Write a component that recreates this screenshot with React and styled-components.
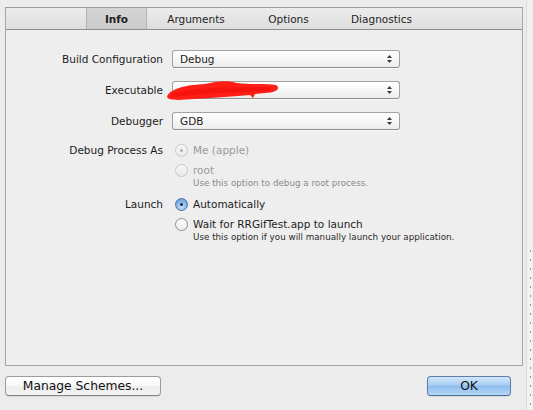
import React from "react";
import styled, { createGlobalStyle } from "styled-components";

const GlobalStyle = createGlobalStyle`
  html, body {
    margin: 0;
    padding: 0;
    background: #ececec;
  }
  body {
    font-family: "DejaVu Sans", "Liberation Sans", sans-serif;
    color: #1c1c1c;
  }
`;

const Sheet = styled.div`
  width: 533px;
  height: 410px;
  box-sizing: border-box;
  padding: 7px 10px 0 5px;
  display: flex;
  flex-direction: column;
  position: relative;
  overflow: hidden;
  background: #ececec;
`;

const EdgeStrip = styled.div`
  position: absolute;
  top: 0;
  right: 0;
  width: 6px;
  height: 410px;
  background: #f1f1f1;
  border-left: 1px solid #dcdcdc;
  &::after {
    content: "";
    position: absolute;
    left: 3px;
    top: 250px;
    width: 1px;
    height: 160px;
    background: repeating-linear-gradient(#8f8f8f 0 2px, transparent 2px 9px);
  }
`;

const Panel = styled.div`
  height: 359px;
  box-sizing: border-box;
  border: 1px solid #a6a6a6;
  border-top-color: #9a9a9a;
  background: #eeeeee;
  display: flex;
  flex-direction: column;
`;

const TabBar = styled.div`
  height: 21px;
  display: flex;
  padding-left: 80px;
  background: linear-gradient(#ececec, #dedede);
  border-bottom: 1px solid #8e8e8e;
`;

const Tab = styled.div`
  display: flex;
  align-items: center;
  justify-content: center;
  font-size: 10.5px;
  width: ${(p) => p.$w}px;
  font-weight: ${(p) => (p.$active ? "bold" : "normal")};
  color: #1e1e1e;
  box-sizing: border-box;
  ${(p) =>
    p.$active &&
    `
    background: linear-gradient(#d4d4d4, #cbcbcb);
    border-left: 1px solid #b3b3b3;
    border-right: 1px solid #b3b3b3;
  `}
`;

const Form = styled.div`
  padding-top: 20px;
  display: flex;
  flex-direction: column;
  gap: 13px;
`;

const Row = styled.div`
  display: grid;
  grid-template-columns: 157px 1fr;
  column-gap: 9px;
  align-items: start;
  margin-top: ${(p) => p.$mt || 0}px;
`;

const Label = styled.div`
  text-align: right;
  font-size: 10.5px;
  line-height: ${(p) => p.$lh || 18}px;
  white-space: nowrap;
`;

const Popup = styled.div`
  width: 228px;
  height: 18px;
  box-sizing: border-box;
  border: 1px solid #a2a2a2;
  border-bottom-color: #8c8c8c;
  border-radius: 3px;
  background: linear-gradient(#ffffff, #f7f7f7 50%, #ececec);
  box-shadow: 0 1px 0 rgba(255, 255, 255, 0.6);
  display: flex;
  align-items: center;
  padding: 0 6px 0 7px;
  font-size: 10.5px;
  position: relative;
`;

const PopupText = styled.span`
  flex: 1;
`;

const Scribble = styled.svg`
  position: absolute;
  left: -8px;
  top: -6px;
`;

const Arrows = () => (
  <svg width="7" height="10" viewBox="0 0 7 10">
    <path d="M3.5 1 L6 4 L1 4 Z" fill="#3a3a3a" />
    <path d="M3.5 9 L6 6 L1 6 Z" fill="#3a3a3a" />
  </svg>
);

const Options = styled.div`
  display: flex;
  flex-direction: column;
  padding-left: 3px;
`;

const Option = styled.div`
  display: flex;
  align-items: center;
  gap: 5px;
  height: 14px;
  margin-top: ${(p) => p.$mt || 0}px;
  font-size: 10.5px;
  color: ${(p) => (p.$disabled ? "#9a9a9a" : "#1c1c1c")};
`;

const Radio = styled.span`
  width: 13px;
  height: 13px;
  box-sizing: border-box;
  border-radius: 50%;
  flex-shrink: 0;
  display: flex;
  align-items: center;
  justify-content: center;
  border: 1px solid
    ${(p) => (p.$disabled ? "#c8c8c8" : p.$on ? "#4a6f9f" : "#8f8f8f")};
  background: ${(p) =>
    p.$disabled
      ? "linear-gradient(#f6f6f6, #e9e9e9)"
      : p.$on
      ? "radial-gradient(circle at 50% 70%, #c8e2fb, #7fb1e6 60%, #5f95d2)"
      : "linear-gradient(#ffffff, #ececec)"};
  &::after {
    content: "";
    display: ${(p) => (p.$on ? "block" : "none")};
    width: 3px;
    height: 3px;
    border-radius: 50%;
    background: ${(p) => (p.$disabled ? "#b0b0b0" : "#1a2a3a")};
  }
`;

const Hint = styled.div`
  padding-left: 18px;
  font-size: 8.75px;
  line-height: 12px;
  color: ${(p) => (p.$disabled ? "#8a8a8a" : "#2a2a2a")};
  white-space: nowrap;
`;

const Footer = styled.div`
  display: flex;
  justify-content: space-between;
  padding-top: 10px;
  padding-right: 12px;
`;

const Button = styled.div`
  width: ${(p) => p.$w}px;
  height: 20px;
  box-sizing: border-box;
  border-radius: 4px;
  display: flex;
  align-items: center;
  justify-content: center;
  font-size: 12.3px;
  color: #111;
  border: 1px solid ${(p) => (p.$primary ? "#5d7fa9" : "#9c9c9c")};
  border-bottom-color: ${(p) => (p.$primary ? "#4f6c92" : "#848484")};
  background: ${(p) =>
    p.$primary
      ? "linear-gradient(#d3e6fa, #a8cdf2 45%, #8dbdec 50%, #b5d8f8)"
      : "linear-gradient(#ffffff, #f7f7f7 50%, #ededed 51%, #f3f3f3)"};
  box-shadow: 0 1px 1px rgba(0, 0, 0, 0.08);
`;

export default function App() {
  return (
    <>
      <GlobalStyle />
      <Sheet>
        <Panel>
          <TabBar>
            <Tab $w={61} $active>
              Info
            </Tab>
            <Tab $w={98}>Arguments</Tab>
            <Tab $w={87}>Options</Tab>
            <Tab $w={99}>Diagnostics</Tab>
          </TabBar>
          <Form>
            <Row>
              <Label>Build Configuration</Label>
              <Popup>
                <PopupText>Debug</PopupText>
                <Arrows />
              </Popup>
            </Row>
            <Row>
              <Label>Executable</Label>
              <Popup>
                <PopupText />
                <Scribble width="116" height="28" viewBox="0 0 116 28">
                  <path
                    d="M2 21 C 4 13, 20 9, 40 8 C 52 5, 62 4, 72 7 C 84 9, 100 7, 111 9 C 116 12, 112 17, 100 17 L 90 18 L 88 22 L 85 19 C 70 20, 50 22, 30 23 C 16 24, 4 25, 2 21 Z"
                    fill="#ff1f17"
                  />
                  <path
                    d="M8 17 C 30 12, 60 11, 106 11 L 105 15 C 70 16, 40 17, 6 21 Z"
                    fill="#f5140e"
                  />
                </Scribble>
                <Arrows />
              </Popup>
            </Row>
            <Row>
              <Label>Debugger</Label>
              <Popup>
                <PopupText>GDB</PopupText>
                <Arrows />
              </Popup>
            </Row>
            <Row>
              <Label $lh={14}>Debug Process As</Label>
              <Options>
                <Option $disabled>
                  <Radio $disabled $on />
                  Me (apple)
                </Option>
                <Option $disabled $mt={6}>
                  <Radio $disabled />
                  root
                </Option>
                <Hint $disabled>Use this option to debug a root process.</Hint>
              </Options>
            </Row>
            <Row $mt={-5}>
              <Label $lh={14}>Launch</Label>
              <Options>
                <Option>
                  <Radio $on />
                  Automatically
                </Option>
                <Option $mt={6}>
                  <Radio />
                  Wait for RRGifTest.app to launch
                </Option>
                <Hint>
                  Use this option if you will manually launch your application.
                </Hint>
              </Options>
            </Row>
          </Form>
        </Panel>
        <Footer>
          <Button $w={156}>Manage Schemes...</Button>
          <Button $w={84} $primary>
            OK
          </Button>
        </Footer>
        <EdgeStrip />
      </Sheet>
    </>
  );
}
